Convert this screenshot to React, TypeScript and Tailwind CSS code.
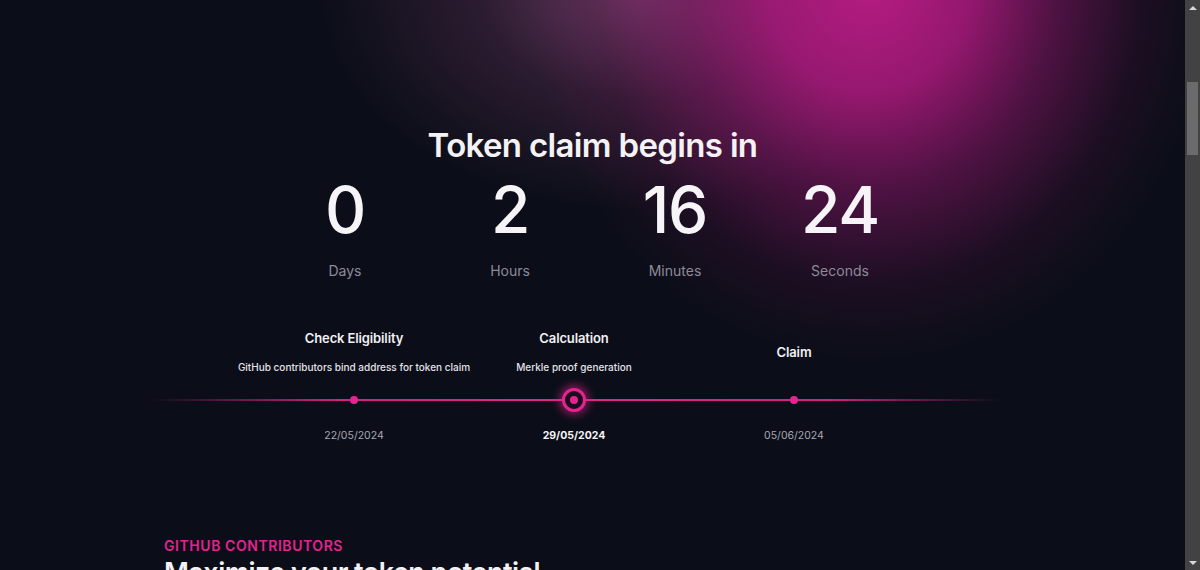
import React from "react";

const units = [
  { value: "0", label: "Days" },
  { value: "2", label: "Hours" },
  { value: "16", label: "Minutes" },
  { value: "24", label: "Seconds" },
];

const steps = [
  { title: "Check Eligibility", desc: "GitHub contributors bind address for token claim", date: "22/05/2024", active: false },
  { title: "Calculation", desc: "Merkle proof generation", date: "29/05/2024", active: true },
  { title: "Claim", desc: "", date: "05/06/2024", active: false },
];

function Dot({ active }: { active: boolean }) {
  if (active) {
    return (
      <div className="flex h-6 w-6 items-center justify-center rounded-full border-[3px] border-[#e3248f] bg-[#1a0c1c] shadow-[0_0_8px_3px_rgba(227,36,143,0.55)]">
        <div className="h-2 w-2 rounded-full bg-[#e3248f]" />
      </div>
    );
  }
  return <div className="h-2 w-2 rounded-full bg-[#e3248f]" />;
}

function Scrollbar() {
  return (
    <aside className="sticky top-0 flex h-screen w-[15px] shrink-0 flex-col items-center bg-[#424242]">
      <div className="flex h-[15px] w-full items-center justify-center">
        <div className="h-0 w-0 border-x-[4px] border-b-[4px] border-x-transparent border-b-[#d8d8d8]" />
      </div>
      <div className="mt-[67px] h-[73px] w-[11px] bg-[#6b6b6b]" />
      <div className="flex-1" />
      <div className="flex h-[15px] w-full items-center justify-center">
        <div className="h-0 w-0 border-x-[4px] border-t-[4px] border-x-transparent border-t-[#d8d8d8]" />
      </div>
    </aside>
  );
}

export default function App() {
  return (
    <div className="flex w-full items-start bg-[#0b0e18]">
      <main
        className="min-h-screen flex-1 overflow-hidden bg-[#0b0e18] text-white"
        style={{ fontFamily: "Inter, 'Noto Sans', sans-serif" }}
      >
        <section className="bg-[radial-gradient(ellipse_340px_380px_at_870px_-20px,rgba(182,28,130,1)_0%,rgba(170,25,124,0.86)_30%,rgba(140,22,105,0.52)_55%,rgba(90,16,70,0.22)_80%,rgba(11,14,24,0)_100%),radial-gradient(ellipse_320px_220px_at_640px_-10px,rgba(170,90,150,0.6)_0%,rgba(120,60,105,0.3)_50%,rgba(11,14,24,0)_100%)] bg-no-repeat pt-[123px] pb-[86px]">
          <h1 className="text-center text-[33px] font-semibold leading-[44px] tracking-[-0.02em] text-[#f4f2f5]">
            Token claim begins in
          </h1>

          <div className="mx-auto mt-[11px] grid w-[660px] grid-cols-4">
            {units.map((u) => (
              <div key={u.label} className="flex flex-col items-center">
                <div className="text-[64px] font-medium leading-[64px] tracking-[-0.02em] text-[#f6f4f7]">
                  {u.value}
                </div>
                <div className="mt-[19px] text-[14px] leading-5 text-[#8d8a99]">{u.label}</div>
              </div>
            ))}
          </div>

          <div className="ml-[150px] mt-[47px] w-[850px]">
            <div className="ml-[94px] grid h-[47px] w-[660px] grid-cols-3">
              {steps.map((s) => (
                <div key={s.title} className="flex flex-col items-center justify-center">
                  <div className="text-[13px] font-semibold leading-5 tracking-[-0.01em] text-[#f2f0f4]">
                    {s.title}
                  </div>
                  {s.desc && (
                    <div className="mt-[11px] whitespace-nowrap text-[10px] font-medium leading-4 text-[#e4e2e8]">
                      {s.desc}
                    </div>
                  )}
                </div>
              ))}
            </div>

            <div className="mt-[13px] h-6 w-[850px] bg-[linear-gradient(90deg,rgba(227,36,143,0)_0%,rgba(227,36,143,0.9)_22%,#e3248f_50%,rgba(227,36,143,0.9)_80%,rgba(227,36,143,0)_100%)] bg-[length:100%_2px] bg-center bg-no-repeat">
              <div className="ml-[94px] grid h-6 w-[660px] grid-cols-3">
                {steps.map((s) => (
                  <div key={s.title} className="flex items-center justify-center">
                    <Dot active={s.active} />
                  </div>
                ))}
              </div>
            </div>

            <div className="ml-[94px] mt-[16px] grid w-[660px] grid-cols-3">
              {steps.map((s) => (
                <div
                  key={s.title}
                  className={
                    s.active
                      ? "text-center text-[10.5px] font-bold leading-4 text-[#f6f4f7]"
                      : "text-center text-[10.5px] leading-4 text-[#a9a7b2]"
                  }
                >
                  {s.date}
                </div>
              ))}
            </div>
          </div>
        </section>

        <section className="pl-[164px] pt-[6px]">
          <div className="text-[14px] font-semibold uppercase leading-5 tracking-[0.04em] text-[#e3248f]">
            GitHub Contributors
          </div>
          <h2 className="mt-[-3px] text-[27px] font-semibold leading-10 tracking-[-0.02em] text-[#f4f2f5]">
            Maximize your token potential
          </h2>
          <div className="h-[400px]" />
        </section>
      </main>
      <Scrollbar />
    </div>
  );
}
